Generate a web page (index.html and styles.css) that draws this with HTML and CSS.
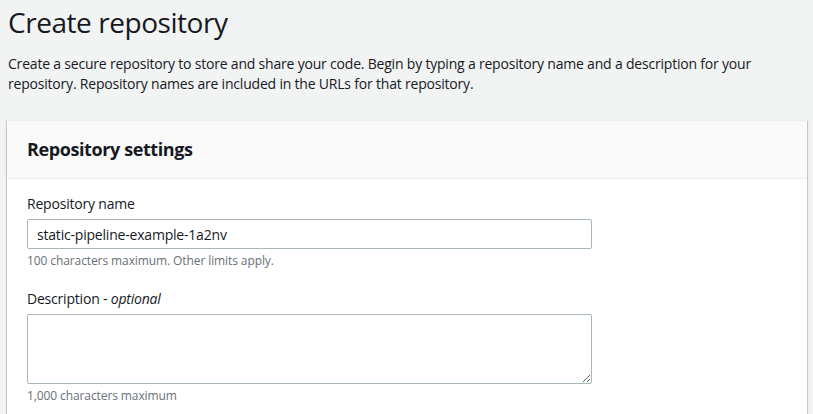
FILE: index.html
```html
<!DOCTYPE html>
<html>
<head>
<meta charset="utf-8">
<title>Create repository</title>
<link rel="stylesheet" href="styles.css">
</head>
<body>
<main class="page">
  <h1 class="title">Create repository</h1>
  <p class="intro">Create a secure repository to store and share your code. Begin by typing a repository name and a description for your repository. Repository names are included in the URLs for that repository.</p>
  <section class="card">
    <header class="card-header">
      <h2 class="card-title">Repository settings</h2>
    </header>
    <div class="card-body">
      <div class="field">
        <label class="label" for="repo-name">Repository name</label>
        <input class="input" id="repo-name" type="text" value="static-pipeline-example-1a2nv">
        <div class="hint">100 characters maximum. Other limits apply.</div>
      </div>
      <div class="field">
        <label class="label" for="repo-desc">Description - <i>optional</i></label>
        <textarea class="textarea" id="repo-desc"></textarea>
        <div class="hint">1,000 characters maximum</div>
      </div>
    </div>
  </section>
</main>
</body>
</html>
```
FILE: styles.css
```css
html, body {
  margin: 0;
  padding: 0;
  background: #f2f3f3;
}
body {
  font-family: "Open Sans", "Noto Sans", sans-serif;
  color: #16191f;
  overflow: hidden;
}
.page {
  padding: 4px 6px 0 8px;
}
.title {
  margin: 0;
  font-size: 28px;
  line-height: 36px;
  font-weight: 400;
  letter-spacing: -0.45px;
  color: #16191f;
}
.intro {
  margin: 14px 0 0;
  font-size: 14px;
  line-height: 20px;
  letter-spacing: -0.2px;
  max-width: 760px;
}
.card {
  margin: 26px 0 0 -1px;
  width: 800px;
  background: #ffffff;
  border-top: 1px solid #eaeded;
  box-shadow: 0 1px 1px 0 rgba(0, 28, 36, 0.3), 1px 1px 1px 0 rgba(0, 28, 36, 0.15), -1px 1px 1px 0 rgba(0, 28, 36, 0.15);
}
.card-header {
  background: #fafafa;
  padding: 17px 20px 18px;
  border-bottom: 1px solid #eaeded;
}
.card-title {
  margin: 0;
  font-size: 18px;
  line-height: 22px;
  font-weight: 700;
  letter-spacing: -0.4px;
}
.card-body {
  padding: 15px 20px 20px;
  display: flex;
  flex-direction: column;
  gap: 20px;
}
.field {
  display: flex;
  flex-direction: column;
  align-items: flex-start;
}
.label {
  font-size: 14px;
  line-height: 20px;
  letter-spacing: -0.2px;
  color: #16191f;
}
.label i {
  font-style: italic;
}
.input, .textarea {
  box-sizing: border-box;
  width: 565px;
  margin: 5px 0 0;
  border: 1px solid #aab7b8;
  border-radius: 2px;
  background: #ffffff;
  font-family: "Open Sans", "Noto Sans", sans-serif;
  font-size: 14px;
  letter-spacing: -0.2px;
  color: #16191f;
  outline: none;
}
.input {
  height: 30px;
  padding: 0 9px;
}
.textarea {
  height: 70px;
  padding: 4px 9px;
  display: block;
}
.hint {
  margin-top: 4px;
  font-size: 12px;
  line-height: 16px;
  letter-spacing: -0.1px;
  color: #687078;
}
```
